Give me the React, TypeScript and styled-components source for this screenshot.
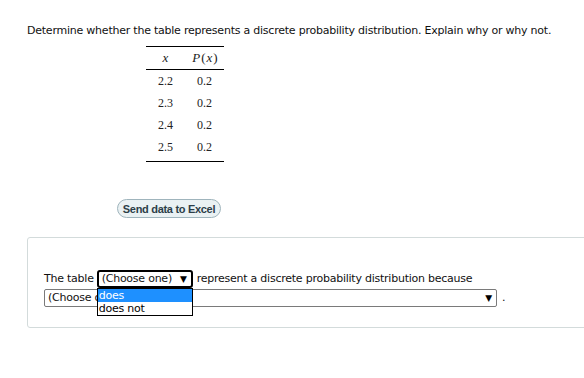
import React from 'react';
import styled, { createGlobalStyle } from 'styled-components';

const GlobalStyle = createGlobalStyle`
  html, body {
    margin: 0;
    padding: 0;
    background: #ffffff;
    overflow: hidden;
  }
`;

const Page = styled.div`
  width: 584px;
  height: 378px;
  padding: 24px 0 0 27px;
  box-sizing: border-box;
  overflow: hidden;
  font-family: "DejaVu Sans", Verdana, sans-serif;
  color: #111;
`;

const Question = styled.div`
  font-size: 11px;
  line-height: 14px;
  letter-spacing: -0.23px;
`;

const DataTable = styled.table`
  margin: 8px 0 0 119px;
  border-collapse: collapse;
  border-top: 1px solid #000;
  border-bottom: 1px solid #000;
  font-family: "Liberation Serif", "Times New Roman", serif;
  font-size: 12px;
  color: #222;
`;

const HeadCell = styled.th<{ $italic?: boolean }>`
  font-weight: normal;
  font-size: 13px;
  font-style: ${p => (p.$italic ? 'italic' : 'normal')};
  width: 39px;
  height: 22px;
  padding: 0;
  border-bottom: 1px solid #000;
  text-align: center;
`;

const MathVar = styled.i`
  margin: 0 1px;
`;

const Cell = styled.td<{ $last?: boolean }>`
  width: 39px;
  height: 22px;
  padding: 0 0 ${p => (p.$last ? '3px' : '0')};
  text-align: center;
`;

const ExcelButton = styled.button`
  display: block;
  margin: 37px 0 0 90px;
  width: 104px;
  height: 19px;
  padding: 0;
  border: 1px solid #9fb4bc;
  border-radius: 10px;
  background: #eaf1f3;
  font-family: "Liberation Sans", Arial, sans-serif;
  font-size: 11px;
  font-weight: bold;
  letter-spacing: -0.3px;
  color: #2c3e48;
`;

const AnswerPanel = styled.div`
  margin-top: 19px;
  width: 600px;
  height: 91px;
  box-sizing: border-box;
  border: 1px solid #d3dbdb;
  border-radius: 3px;
  padding: 31px 0 0 16px;
  font-size: 11px;
  letter-spacing: -0.24px;
`;

const Line = styled.div`
  display: flex;
  align-items: center;
  height: 19px;
  white-space: nowrap;
`;

const SelectWrap = styled.div`
  position: relative;
  margin: 0 4px 0 3px;
`;

const Select = styled.div<{ $width: number; $focused?: boolean }>`
  width: ${p => p.$width}px;
  height: 18px;
  box-sizing: border-box;
  display: flex;
  align-items: center;
  justify-content: space-between;
  padding: 0 4px 0 3px;
  border: ${p => (p.$focused ? '2px solid #000' : '1px solid #7a7a7a')};
  border-radius: ${p => (p.$focused ? '3px' : '2px')};
  background: #fff;
  overflow: hidden;
`;

const Arrow = styled.span`
  font-size: 9px;
  color: #000;
`;

const Options = styled.ul`
  position: absolute;
  left: 0;
  top: 18px;
  width: 96px;
  box-sizing: border-box;
  margin: 0;
  padding: 0;
  list-style: none;
  border: 1px solid #000;
  background: #fff;
  z-index: 2;
`;

const Option = styled.li<{ $active?: boolean }>`
  height: 13px;
  line-height: 13px;
  padding-left: 1px;
  background: ${p => (p.$active ? '#1e90ff' : '#fff')};
  color: ${p => (p.$active ? '#fff' : '#000')};
`;

const Period = styled.span`
  margin-left: 5px;
`;

const rows = [
  ['2.2', '0.2'],
  ['2.3', '0.2'],
  ['2.4', '0.2'],
  ['2.5', '0.2'],
];

const App: React.FC = () => {
  return (
    <Page>
      <GlobalStyle />
      <Question>
        Determine whether the table represents a discrete probability distribution. Explain why or why not.
      </Question>

      <DataTable>
        <thead>
          <tr>
            <HeadCell $italic>x</HeadCell>
            <HeadCell><MathVar>P</MathVar>(<MathVar>x</MathVar>)</HeadCell>
          </tr>
        </thead>
        <tbody>
          {rows.map((r, i) => (
            <tr key={r[0]}>
              <Cell $last={i === rows.length - 1}>{r[0]}</Cell>
              <Cell $last={i === rows.length - 1}>{r[1]}</Cell>
            </tr>
          ))}
        </tbody>
      </DataTable>

      <ExcelButton>Send data to Excel</ExcelButton>

      <AnswerPanel>
        <Line>
          The table
          <SelectWrap>
            <Select $width={96} $focused>
              <span>(Choose one)</span>
              <Arrow>▼</Arrow>
            </Select>
            <Options>
              <Option $active>does</Option>
              <Option>does not</Option>
            </Options>
          </SelectWrap>
          represent a discrete probability distribution because
        </Line>
        <Line>
          <Select $width={453}>
            <span>(Choose one)</span>
            <Arrow>▼</Arrow>
          </Select>
          <Period>.</Period>
        </Line>
      </AnswerPanel>
    </Page>
  );
};

export default App;
